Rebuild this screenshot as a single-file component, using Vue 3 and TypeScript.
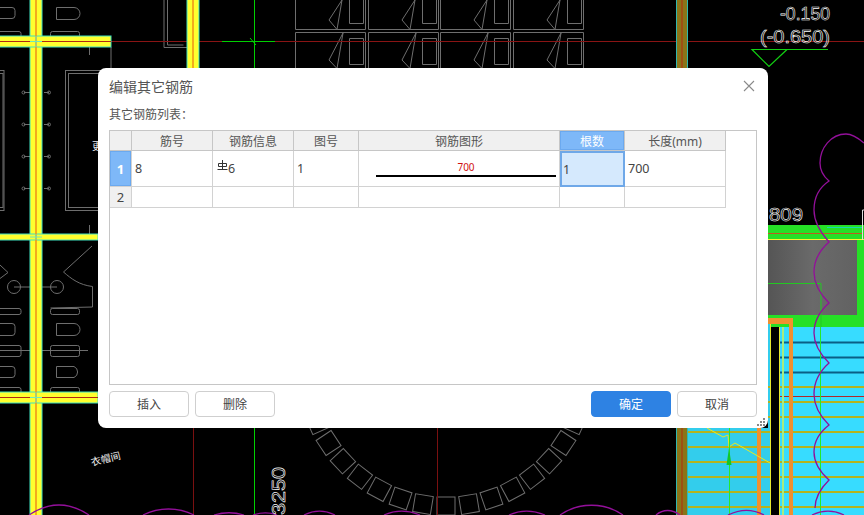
<script setup lang="ts">
import { computed } from 'vue';

const columns = ['筋号', '钢筋信息', '图号', '钢筋图形', '根数', '长度(mm)'];
const floors = [387, 402, 417, 432, 447, 462, 477, 492, 507];
const knobs = [92, 124, 156, 188];
const windowCols = [295, 368, 440, 513];

const tiles = computed(() => {
  const list: string[] = [];
  for (let i = -9; i <= 9; i++) {
    const x = 446 + 141 * Math.sin((i * 9.4 * Math.PI) / 180);
    const y = 365 + 141 * Math.cos((i * 9.4 * Math.PI) / 180);
    list.push(`translate(${x} ${y}) rotate(${-i * 9.4})`);
  }
  return list;
});
</script>

<template>
  <div class="screen">
    <svg class="drawing" width="864" height="515" viewBox="0 0 864 515">
      <defs>
        <linearGradient id="slab" x1="0" x2="1" y1="0" y2="0">
          <stop offset="0" stop-color="#555" />
          <stop offset="0.5" stop-color="#6a6a6a" />
          <stop offset="1" stop-color="#626262" />
        </linearGradient>
      </defs>
      <g fill="none" stroke="#6e6e6e" stroke-width="1">
        <!-- washroom, left side -->
        <rect x="-6" y="7.500" width="21" height="11" rx="3" />
        <path d="M63 7.500h11a6 6 0 0 1 0 12H56.500v-12z" />
        <rect x="-8" y="31.500" width="29" height="6" rx="2" />
        <rect x="50.500" y="31.500" width="29" height="6" rx="2" />
        <path d="M89.500 47v8M111 47v22" />
        <rect x="-10" y="70.500" width="14" height="140" />
        <rect x="-10" y="73.500" width="13" height="134" />
        <rect x="65.500" y="70.500" width="40" height="140" />
        <rect x="68.500" y="73.500" width="40" height="134" />
        <path v-for="y in knobs" :key="y" :d="`M24 ${y}.500h6M44 ${y}.500h5`" />
        <circle v-for="y in knobs" :key="'a' + y" cx="23.500" :cy="y + 0.5" r="1.500" />
        <circle v-for="y in knobs" :key="'b' + y" cx="49" :cy="y + 0.5" r="1.500" />
        <path d="M89.500 225v12M92 246 63.500 272c8 7 16 13 29 14.500v20.500l-42 1" />
        <path d="M0 265l8 7.500-8 6M14 287h43" />
        <circle cx="14" cy="287" r="6.500" />
        <circle cx="57" cy="287" r="6.500" />
        <rect x="-8" y="308.500" width="29" height="6" rx="2" />
        <rect x="50.500" y="308.500" width="29" height="6" rx="2" />
        <rect x="-6" y="323.500" width="21" height="12" rx="3" />
        <path d="M63 323.500h11a6 6 0 0 1 0 12H56.500v-12z" />
        <rect x="-8" y="345.500" width="29" height="11" rx="2" />
        <rect x="50.500" y="345.500" width="29" height="11" rx="2" />
        <path d="M0 350.500h88" />
        <rect x="-6" y="366.500" width="21" height="11" rx="3" />
        <path d="M63 366.500h11a6 6 0 0 1 0 11H56.500v-11z" />
        <rect x="-8" y="387.500" width="29" height="6" rx="2" />
        <rect x="50.500" y="387.500" width="29" height="6" rx="2" />
        <!-- door by the top column -->
        <path d="M164 0v47.500h23M167.500 0v45h16" />
        <!-- windows along the top -->
        <g v-for="x in windowCols" :key="x" :transform="`translate(${x} 0)`">
          <path d="M0.500 0v29.500h70V0M0.500 68V32.500h70V68" />
          <path d="M47 0 34 20l8 9.500L47 0M54.500 0v23.500h14V0" />
          <path d="M48 33 34 60l8 8.500L48 33M54.500 38.500h14v26h-14z" />
        </g>
        <!-- round tiled floor -->
        <rect v-for="t in tiles" :key="t" x="-9" y="-9" width="18" height="18" :transform="t" />
      </g>

      <!-- grid lines -->
      <path d="M111 41.500h753" stroke="#8a1414" fill="none" />
      <path d="M193.500 428v87M437.500 428v87" stroke="#7a1010" fill="none" />
      <path d="M254.500 0v515M222 41.500h53" stroke="#00d000" fill="none" />
      <path d="M250 38l6 7" stroke="#00d000" fill="none" />

      <!-- yellow beams and columns -->
      <g class="beam">
        <rect x="30" y="-2" width="12" height="519" />
        <rect x="187" y="-2" width="12" height="72" />
        <rect x="-2" y="36" width="113" height="11" />
        <rect x="-2" y="234" width="100" height="6" />
        <rect x="-2" y="392" width="100" height="11" />
      </g>
      <path d="M36 0v515M193 0v68" stroke="#f09018" stroke-width="1.500" fill="none" />
      <path d="M0 41.500h111M0 397.500h98" stroke="#b02a10" fill="none" />
      <path d="M30 41.500h12M36 36v11M30 237h12M36 234v6M30 397.500h12M36 392v11" stroke="#6be8c0" fill="none" />

      <!-- olive column, top and bottom -->
      <rect x="676.500" y="-2" width="11" height="72" fill="#8a7418" stroke="#2fb8b0" />
      <rect x="676.500" y="426" width="11" height="91" fill="#8a7418" stroke="#2fb8b0" />
      <path d="M682 0v68M682 428v87" stroke="#b02a10" fill="none" />

      <!-- stair block on the right -->
      <rect x="768" y="225" width="96" height="102" fill="#26e026" />
      <rect x="768" y="240" width="89" height="75" fill="url(#slab)" />
      <path d="M768 233.500h94" stroke="#c05a20" fill="none" />
      <path d="M827 227.500h35" stroke="#18d8b0" fill="none" />
      <path d="M768 239.500h96" stroke="#f8f830" fill="none" />
      <path d="M768 283.500h53V327" stroke="#22c822" fill="none" />
      <path d="M862.500 240v-30h2" stroke="#ddd" fill="none" />
      <rect x="780" y="327" width="84" height="188" fill="#37dcff" />
      <rect x="688" y="428" width="83" height="87" fill="#33cdec" />
      <rect x="768" y="324" width="3" height="104" fill="#33cdec" />
      <rect x="771" y="327" width="9" height="188" fill="#000" />
      <path d="M780 342.500h84M780 357.500h84M780 372.500h84" stroke="#0a5f86" stroke-width="2" fill="none" />
      <path v-for="y in floors" :key="y" :d="`M688 ${y}h83M780 ${y}h84`" stroke="#b4b41e" stroke-width="2" fill="none" />
      <path d="M780 396.500h84" stroke="#b0282a" fill="none" />
      <rect x="757" y="428" width="4" height="87" fill="#f09030" />
      <rect x="789" y="318" width="4" height="197" fill="#f09030" />
      <rect x="768" y="318" width="25" height="6" fill="#f09030" />
      <path d="M770.500 324v191M779.500 327v188" stroke="#e8e830" fill="none" />
      <path d="M783 327v188" stroke="#a8ec80" stroke-width="2" fill="none" />
      <path d="M707 428l16 9 5-2 1 12 6-4 35 20" stroke="#e8e820" fill="none" />
      <path d="M729.500 428v87M820.500 327v188" stroke="#28e828" fill="none" />
      <path d="M729 448l-2.500 17h5z" fill="#12c828" />

      <!-- purple revision cloud -->
      <g fill="none" stroke="#93109a" stroke-width="1.300">
        <path d="M864 143c-7-6-12-9-18-9-15 0-26 14-26 29 0 7 3 13 9 18-9 6-15 16-15 29 0 12 6 22 15 32-9 8-15 18-15 30 0 12 6 22 15 31-9 8-15 18-15 30 0 12 6 21 15 30-9 8-15 18-15 31 0 12 6 22 15 31-9 7-15 16-15 27 0 10 6 20 15 28-7 7-14 16-14 28" />
        <path d="M29 515c9-6 19-10 30-10s21 4 30 10M143 515c16-8 35-8 51 0M214 515c10-3 20-3 30 0M253 515c9-3 16-3 24 0M304 515c10-5 21-5 31 0M384 515c11-5 24-5 36 0M509 515c11-5 24-5 36 0M560 515c19-13 44-13 63 0M656 515c7-6 16-6 24 0" />
        <path d="M728 515c12-6 25-6 36 0M812 515c10-5 22-5 32 0" />
      </g>

      <!-- level mark -->
      <path d="M828 49.500h-76l17 17 18-17" stroke="#12d012" stroke-width="1.200" fill="none" />

      <g class="cad-text">
        <text x="780" y="20" textLength="50" lengthAdjust="spacingAndGlyphs">-0.150</text>
        <text x="760" y="43" textLength="70" lengthAdjust="spacingAndGlyphs">(-0.650)</text>
        <text x="769" y="221" font-size="30" textLength="34" lengthAdjust="spacingAndGlyphs">809</text>
        <text transform="translate(285 515) rotate(-90)" font-size="27" textLength="48" lengthAdjust="spacingAndGlyphs">3250</text>
      </g>
      <text class="room" transform="translate(92 466) rotate(-14)">衣帽间</text>
      <text class="room" x="92" y="150" font-size="11">更</text>
    </svg>

    <div class="dialog">
      <div class="title-bar">
        <span class="title">编辑其它钢筋</span>
        <svg class="close" width="12" height="12" viewBox="0 0 12 12">
          <path d="M1 1l10 10M11 1 1 11" stroke="#8a8a8a" stroke-width="1.100" fill="none" />
        </svg>
      </div>
      <div class="list-label">其它钢筋列表：</div>

      <div class="table-box">
        <div class="sheet">
          <div class="cell head corner"></div>
          <div
            v-for="(c, i) in columns"
            :key="c"
            class="cell head"
            :class="{ 'head-on': i === 4 }"
          >{{ c }}</div>

          <div class="cell num num-on">1</div>
          <div class="cell val">8</div>
          <div class="cell val">
            <svg class="grade" width="11" height="11" viewBox="0 0 11 11">
              <path d="M5.500 0v9M0.500 9.500h10M1.500 3.500h8v3h-8z" stroke="#333" stroke-width="1" fill="none" />
            </svg>6
          </div>
          <div class="cell val">1</div>
          <div class="cell shape">
            <span class="dim">700</span>
            <span class="bar"></span>
          </div>
          <div class="cell val active">1</div>
          <div class="cell val">700</div>

          <div class="cell num">2</div>
          <div class="cell"></div>
          <div class="cell"></div>
          <div class="cell"></div>
          <div class="cell"></div>
          <div class="cell"></div>
          <div class="cell"></div>
        </div>
      </div>

      <div class="actions">
        <button class="btn">插入</button>
        <button class="btn">删除</button>
        <span class="spacer"></span>
        <button class="btn primary">确定</button>
        <button class="btn">取消</button>
      </div>

      <svg class="grip" width="9" height="9" viewBox="0 0 9 9">
        <path d="M6 0h2v2H6zM3 3h2v2H3zM6 3h2v2H6zM0 6h2v2H0zM3 6h2v2H3zM6 6h2v2H6z" fill="#888" />
      </svg>
    </div>
  </div>
</template>

<style scoped>
.screen {
  position: relative;
  width: 864px;
  height: 515px;
  overflow: hidden;
  background: #000;
  font-family: "Noto Sans", "Noto Sans CJK SC", sans-serif;
}

.drawing {
  position: absolute;
  left: 0;
  top: 0;
}

.beam rect {
  fill: #ffff2e;
  stroke: #3fe0c0;
  stroke-width: 1;
}

.cad-text text {
  font-family: "Liberation Sans", sans-serif;
  font-size: 19px;
  fill: none;
  stroke: #fff;
  stroke-width: 0.6;
}

.room {
  font-family: "Noto Sans CJK SC", sans-serif;
  font-size: 10px;
  fill: #eee;
}

.dialog {
  position: absolute;
  left: 98px;
  top: 68px;
  width: 670px;
  height: 360px;
  box-sizing: border-box;
  padding: 0 11px;
  display: flex;
  flex-direction: column;
  background: #fff;
  border-radius: 8px;
}

.title-bar {
  height: 36px;
  display: flex;
  align-items: center;
  justify-content: space-between;
  padding-right: 2px;
}

.title {
  font-size: 14px;
  color: #555;
}

.list-label {
  height: 26px;
  line-height: 22px;
  font-size: 12px;
  color: #555;
}

.table-box {
  width: 648px;
  height: 255px;
  box-sizing: border-box;
  border: 1px solid #c6c6c6;
}

.sheet {
  display: grid;
  grid-template-columns: 22px 81px 81px 65px 201px 65px 101px;
  grid-template-rows: 20px 36px 21px;
  width: 616px;
}

.cell {
  box-sizing: border-box;
  border-right: 1px solid #d2d2d2;
  border-bottom: 1px solid #d2d2d2;
  font-size: 12px;
  color: #444;
}

.head {
  display: flex;
  align-items: center;
  justify-content: center;
  background: #f0f0f0;
  border-color: #c6c6c6;
  color: #555;
}

.head-on {
  background: #7eb8f8;
  color: #fff;
  box-shadow: inset 0 0 0 1px #6ba9ef;
}

.num {
  display: flex;
  align-items: center;
  justify-content: center;
  background: #f0f0f0;
  font-size: 13px;
  color: #444;
}

.num-on {
  background: #7eb8f8;
  box-shadow: inset 0 0 0 1px #6ba9ef;
  color: #fff;
  font-weight: 700;
}

.val {
  display: flex;
  align-items: center;
  padding-left: 3px;
  font-size: 12.500px;
}

.grade {
  margin: -6px 0 0 1px;
}

.active {
  background: #d5e9fd;
  border: 2px solid #6fa8e8;
  padding-left: 1px;
}

.shape {
  display: flex;
  flex-direction: column;
  align-items: center;
  padding: 9px 0 0 14px;
}

.dim {
  font-size: 10px;
  line-height: 14px;
  color: #d01010;
}

.bar {
  width: 180px;
  height: 2px;
  margin-top: 1px;
  background: #000;
}

.actions {
  display: flex;
  gap: 6px;
  margin-top: 6px;
}

.spacer {
  flex: 1;
}

.btn {
  width: 80px;
  height: 26px;
  padding: 0;
  box-sizing: border-box;
  border: 1px solid #cfcfcf;
  border-radius: 4px;
  background: #fff;
  font-family: inherit;
  font-size: 12px;
  color: #444;
}

.primary {
  border-color: #2e82e3;
  background: #2e82e3;
  color: #fff;
}

.grip {
  position: absolute;
  right: 2px;
  bottom: 1px;
}
</style>
